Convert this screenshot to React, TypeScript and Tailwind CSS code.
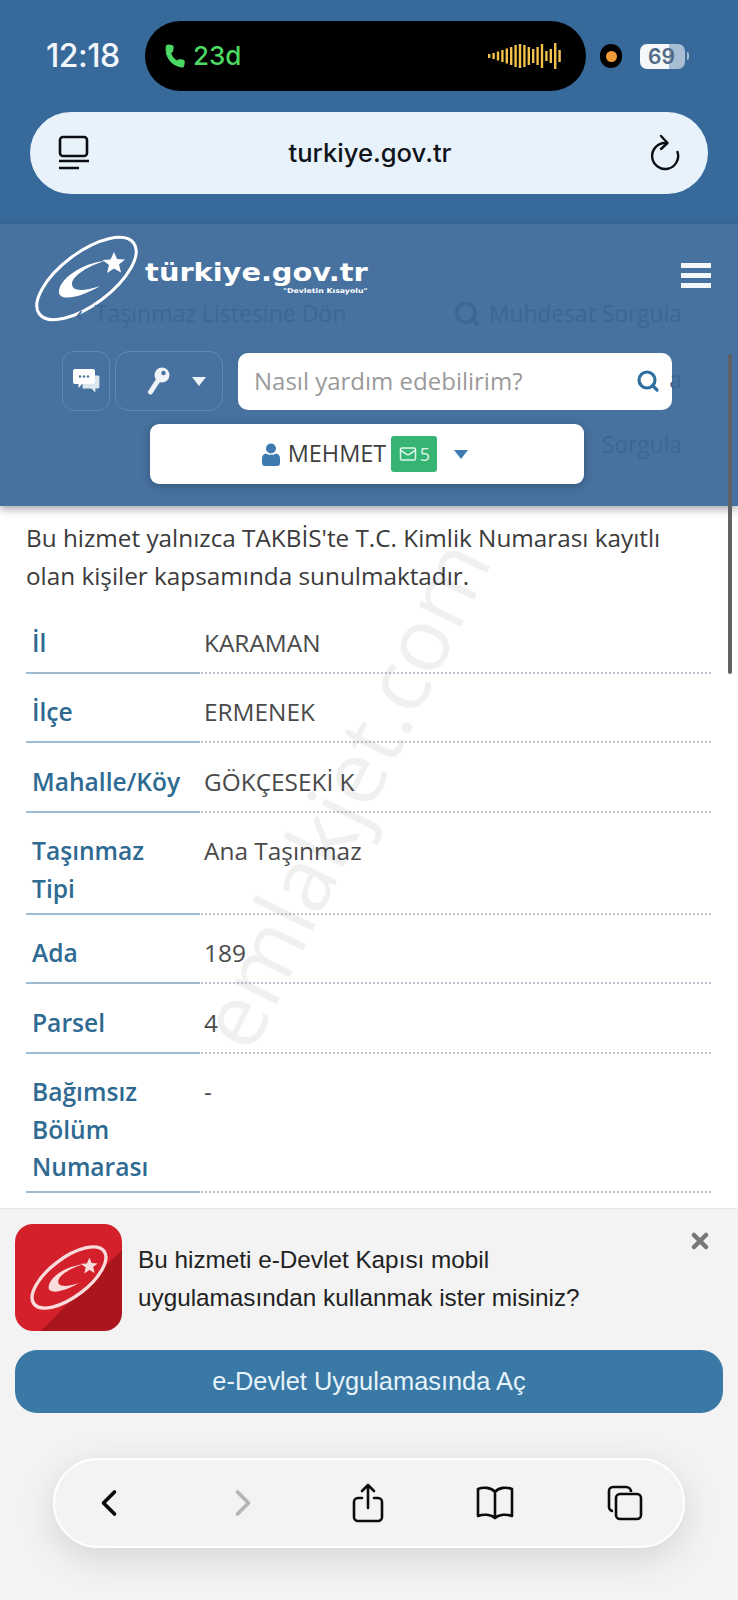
import { Search, ChevronLeft, ChevronRight, X, Mail, Phone } from 'lucide-react';

const rows = [
  { label: ['İl'], value: 'KARAMAN' },
  { label: ['İlçe'], value: 'ERMENEK' },
  { label: ['Mahalle/Köy'], value: 'GÖKÇESEKİ K' },
  { label: ['Taşınmaz', 'Tipi'], value: 'Ana Taşınmaz' },
  { label: ['Ada'], value: '189' },
  { label: ['Parsel'], value: '4' },
  { label: ['Bağımsız', 'Bölüm', 'Numarası'], value: '-' },
];

const wave = [4, 6, 9, 12, 15, 18, 22, 24, 22, 18, 14, 18, 24, 10, 14, 26, 12];

function Emblem({ className, color = 'white', ring = 3 }: { className?: string; color?: string; ring?: number }) {
  return (
    <svg viewBox="0 0 105 87" className={className} fill="none">
      <ellipse cx="52.5" cy="43.5" rx="59" ry="26" transform="rotate(-37 52.5 43.5)" stroke={color} strokeWidth={ring} />
      <path d="M71 26C48 28 25 44 25 57C25 66 44 64 66 51C48 57 38 56 38 49C38 41 54 31 71 26Z" fill={color} />
      <path d="M80 17l3 7 8 .5-6 5 2 8-7-4-7 4.500 2-8-6.500-5 8-.5z" fill={color} />
    </svg>
  );
}

function Caret() {
  return <span className="w-0 h-0 border-x-[7px] border-x-transparent border-t-[9px]" />;
}

export default function App() {
  return (
    <div className="relative w-[738px] h-[1600px] overflow-hidden flex flex-col bg-white font-['Open_Sans',sans-serif]">
      {/* ── Safari top ─────────────────────────────────── */}
      <div className="h-[224px] shrink-0 bg-[#38699b] px-[30px] pt-[21px]">
        <div className="flex items-center h-[70px]">
          <span className="w-[115px] pl-[16px] text-[32px] font-medium text-[#f2f6fa] font-['Inter',sans-serif] tracking-[-0.5px]">12:18</span>
          <div className="w-[441px] h-[70px] rounded-[35px] bg-black flex items-center justify-between pl-[18px] pr-[24px]">
            <div className="flex items-center gap-[6px] text-[#4cd964]">
              <Phone size={24} fill="currentColor" strokeWidth={1} className="rotate-[8deg]" />
              <span className="text-[26px] font-medium font-['Inter',sans-serif] leading-none">23d</span>
            </div>
            <svg width="74" height="28" viewBox="0 0 74 28">
              {wave.map((h, i) => (
                <rect key={i} x={i * 4.4} y={14 - h / 2} width="2.4" height={h} fill="#f3c04a" />
              ))}
            </svg>
          </div>
          <span className="ml-[14px] w-[22px] h-[24px] rounded-full bg-black flex items-center justify-center">
            <span className="w-[11px] h-[11px] rounded-full bg-[#f09a37]" />
          </span>
          <span className="ml-[18px] w-[45px] h-[25px] rounded-[7px] bg-[linear-gradient(90deg,#f5f7f9_0,#f5f7f9_65%,#a9bdd3_65%)] text-[#4f6a86] text-[21px] font-semibold leading-[25px] pl-[8px] font-['Inter',sans-serif]">69</span>
          <span className="ml-[2px] w-[2px] h-[8px] rounded-r-full bg-[#a9bdd3]" />
        </div>
        <div className="mt-[21px] h-[82px] rounded-[41px] bg-[#e8f2fa] flex items-center justify-between pl-[28px] pr-[26px]">
          <svg width="32" height="36" viewBox="0 0 32 36" fill="none" stroke="#0b0f14" strokeWidth="2.6">
            <rect x="2" y="2" width="27" height="19" rx="3" />
            <path d="M1 26h30M1 33h20" />
          </svg>
          <span className="text-[25.6px] font-medium text-[#10151a] font-['Inter',sans-serif]">turkiye.gov.tr</span>
          <svg width="32" height="38" viewBox="0 0 32 38" fill="none" stroke="#0b0f14" strokeWidth="2.4" strokeLinecap="round" strokeLinejoin="round">
            <path d="M27.500 18A13 13 0 1 1 15 9" />
            <path d="M11 2l6.500 7-6.500 6" />
          </svg>
        </div>
      </div>

      {/* ── Site header ────────────────────────────────── */}
      <div className="relative z-10 h-[282px] shrink-0 bg-[#47729f] shadow-[0_3px_8px_rgba(60,60,60,0.45)] px-[35px] pt-[11px]">
        <div className="absolute left-[76px] top-[72px] text-[23px] font-medium text-[#3a6795] whitespace-nowrap">‹ &nbsp;Taşınmaz Listesine Dön</div>
        <div className="absolute right-[56px] top-[73px] flex items-center gap-[8px] text-[22.8px] font-medium text-[#3a6795]">
          <Search size={28} strokeWidth={3} />
          Muhdesat Sorgula
        </div>
        <div className="absolute right-[56px] top-[204px] text-[22.8px] font-medium text-[#3a6795]">Sorgula</div>
        <div className="absolute right-[56px] top-[139px] text-[22.8px] font-medium text-[#3a6795]">a</div>

        <div className="flex items-start justify-between">
          <div className="flex items-start -ml-[1px]">
            <Emblem className="w-[105px] h-[87px] shrink-0" />
            <div className="mt-[23px] ml-[3px] w-[188px] origin-left scale-x-[1.2] flex flex-col items-end text-white font-['DejaVu_Sans',sans-serif] font-bold">
              <span className="text-[24px] leading-[30px] whitespace-nowrap">türkiye.gov.tr</span>
              <span className="text-[6.5px] leading-[6px] whitespace-nowrap">"Devletin Kısayolu"</span>
            </div>
          </div>
          <div className="mt-[28px] mr-[-8px] w-[30px] flex flex-col gap-[5px]">
            <span className="h-[5px] bg-[#f4f7fa]" />
            <span className="h-[5px] bg-[#f4f7fa]" />
            <span className="h-[5px] bg-[#f4f7fa]" />
          </div>
        </div>

        <div className="mt-[29px] ml-[27px] flex items-center">
          <div className="w-[48px] h-[60px] rounded-[12px] border border-[#5f88b2] flex items-center justify-center">
            <svg width="29" height="29" viewBox="0 0 29 29">
              <path d="M10 8h16a2 2 0 0 1 2 2v10a2 2 0 0 1-2 2h-2v5l-5-5h-9z" fill="#dce6ef" stroke="#47729f" strokeWidth="1.2" />
              <path d="M3 2h18a2 2 0 0 1 2 2v11a2 2 0 0 1-2 2H10l-3.500 4v-4H3a2 2 0 0 1-2-2V4a2 2 0 0 1 2-2z" fill="#fff" />
              <circle cx="8" cy="9.500" r="1.200" fill="#47729f" />
              <circle cx="12" cy="9.500" r="1.200" fill="#47729f" />
              <circle cx="16" cy="9.500" r="1.200" fill="#47729f" />
            </svg>
          </div>
          <div className="ml-[5px] w-[108px] h-[60px] rounded-[14px] border border-[#5f88b2] flex items-center justify-center gap-[22px] pl-[14px] text-[#eef3f8]">
            <svg width="23" height="28" viewBox="0 0 23 28">
              <path d="M3.500 25L12 12" stroke="currentColor" strokeWidth="5" strokeLinecap="round" />
              <circle cx="15" cy="8" r="7.500" fill="currentColor" />
              <circle cx="16.500" cy="6" r="2.200" fill="#47729f" />
            </svg>
            <Caret />
          </div>
          <div className="ml-[15px] w-[434px] h-[57px] rounded-[10px] bg-white flex items-center justify-between pl-[16px] pr-[12px]">
            <span className="text-[24px] text-[#9a9a9a]">Nasıl yardım edebilirim?</span>
            <Search size={24} strokeWidth={3.2} className="text-[#2f6f9f]" />
          </div>
        </div>

        <div className="mt-[13px] ml-[115px] w-[434px] h-[60px] rounded-[9px] bg-white shadow-[0_2px_8px_rgba(30,50,70,0.45)] flex items-center justify-center pr-[4px] text-[#3f3f3f]">
          <svg width="18" height="23" viewBox="0 0 18 23" fill="#3e7bb0">
            <circle cx="9" cy="5.500" r="5" />
            <path d="M3.500 10.500c3 1.800 8 1.800 11 0 2 .6 3.500 2.500 3.500 5V20a3 3 0 0 1-3 3H3a3 3 0 0 1-3-3v-4.500c0-2.500 1.500-4.400 3.500-5z" />
          </svg>
          <span className="ml-[8px] text-[23.5px]">MEHMET</span>
          <span className="ml-[5px] w-[46px] h-[36px] rounded-[3px] bg-[#36b474] flex items-center justify-center gap-[3px] text-[#dff5ea] text-[18px]">
            <Mail size={18} />
            5
          </span>
          <span className="ml-[17px] text-[#3e7bb0] flex"><Caret /></span>
        </div>
      </div>

      {/* ── Content ────────────────────────────────────── */}
      <div className="flex-1 min-h-0 overflow-hidden pl-[26px] pr-[27px] pt-[13px]">
        <p className="text-[24.3px] leading-[37.5px] text-[#3b3b3b]">
          Bu hizmet yalnızca TAKBİS'te T.C. Kimlik Numarası kayıtlı olan kişiler kapsamında sunulmaktadır.
        </p>
        <div className="mt-[10px]">
          {rows.map((row) => (
            <div key={row.value} className="flex min-h-[69.5px] border-b-2 border-dotted border-[#b9c4d0]">
              <div className="w-[174px] shrink-0 -mb-[2px] border-b-2 border-[#9dbbd2] pl-[6px] pt-[19.5px] pb-[5.5px] text-[24.6px] leading-[37.5px] font-[550] text-[#2e6a92]">
                {row.label.map((l) => (
                  <div key={l}>{l}</div>
                ))}
              </div>
              <div className="pl-[4px] pt-[19.5px] text-[24.4px] leading-[37.5px] text-[#4a4a4a]">{row.value}</div>
            </div>
          ))}
        </div>
      </div>

      {/* ── App banner ─────────────────────────────────── */}
      <div className="relative z-10 h-[392px] shrink-0 bg-[#f3f3f3] border-t border-[#e6e6e6] px-[15px] pt-[15px] font-['Liberation_Sans',sans-serif]">
        <X size={24} strokeWidth={4.5} className="absolute right-[26px] top-[20px] text-[#777777]" />
        <div className="flex items-start">
          <div className="w-[107px] h-[107px] shrink-0 rounded-[18px] bg-[linear-gradient(135deg,#d4202a_62%,#ab151c_62%)] flex items-center justify-center">
            <Emblem className="w-[78px] h-[65px]" color="#fbdcdc" ring={4.5} />
          </div>
          <p className="ml-[16px] mt-[17px] text-[24.3px] leading-[38px] text-[#222222]">
            Bu hizmeti e-Devlet Kapısı mobil
            <br />
            uygulamasından kullanmak ister misiniz?
          </p>
        </div>
        <button className="mt-[19px] w-[708px] h-[63px] rounded-[22px] bg-[#3a78a5] text-[25.4px] text-[#e6f3fa]">
          e-Devlet Uygulamasında Aç
        </button>
        <div className="mt-[45px] ml-[38px] w-[632px] h-[90px] rounded-[45px] bg-[#f3f3f4] border-2 border-white shadow-[0_10px_36px_rgba(0,0,0,0.13)] flex items-center justify-between pl-[38px] pr-[40px] text-[#0b0b0b]">
          <ChevronLeft size={44} strokeWidth={2} className="-ml-[6px]" />
          <ChevronRight size={44} strokeWidth={2} className="text-[#b5b5b5]" />
          <svg width="32" height="40" viewBox="0 0 32 40" fill="none" stroke="currentColor" strokeWidth="2.6" strokeLinecap="round" strokeLinejoin="round" className="-translate-x-[3px]">
            <path d="M10 15H6a4 4 0 0 0-4 4v15a4 4 0 0 0 4 4h20a4 4 0 0 0 4-4V19a4 4 0 0 0-4-4h-4" />
            <path d="M16 25V2M10 8l6-6 6 6" />
          </svg>
          <svg width="40" height="34" viewBox="0 0 40 34" fill="none" stroke="currentColor" strokeWidth="2.6" strokeLinejoin="round" className="-translate-x-[2px]">
            <path d="M20 6C16 1 8 1 3 3v27c5-2 13-2 17 2 4-4 12-4 17-2V3c-5-2-13-2-17 3zM20 6v26" />
          </svg>
          <svg width="36" height="36" viewBox="0 0 36 36" fill="none" stroke="currentColor" strokeWidth="2.6">
            <path d="M6 26a4 4 0 0 1-4-4V6a4 4 0 0 1 4-4h13a5 5 0 0 1 5 5" />
            <rect x="9" y="9" width="25" height="25" rx="4" />
          </svg>
        </div>
      </div>

      {/* ── Overlays ───────────────────────────────────── */}
      <div className="absolute left-[728px] top-[354px] w-[4px] h-[320px] rounded-full bg-[#5f6164] z-20" />
      <div className="absolute left-[-8px] top-[743px] w-[700px] h-[100px] leading-[100px] text-center -rotate-[64deg] text-[88px] text-black/[0.06] pointer-events-none whitespace-nowrap">
        emlakjet.com
      </div>
    </div>
  );
}
